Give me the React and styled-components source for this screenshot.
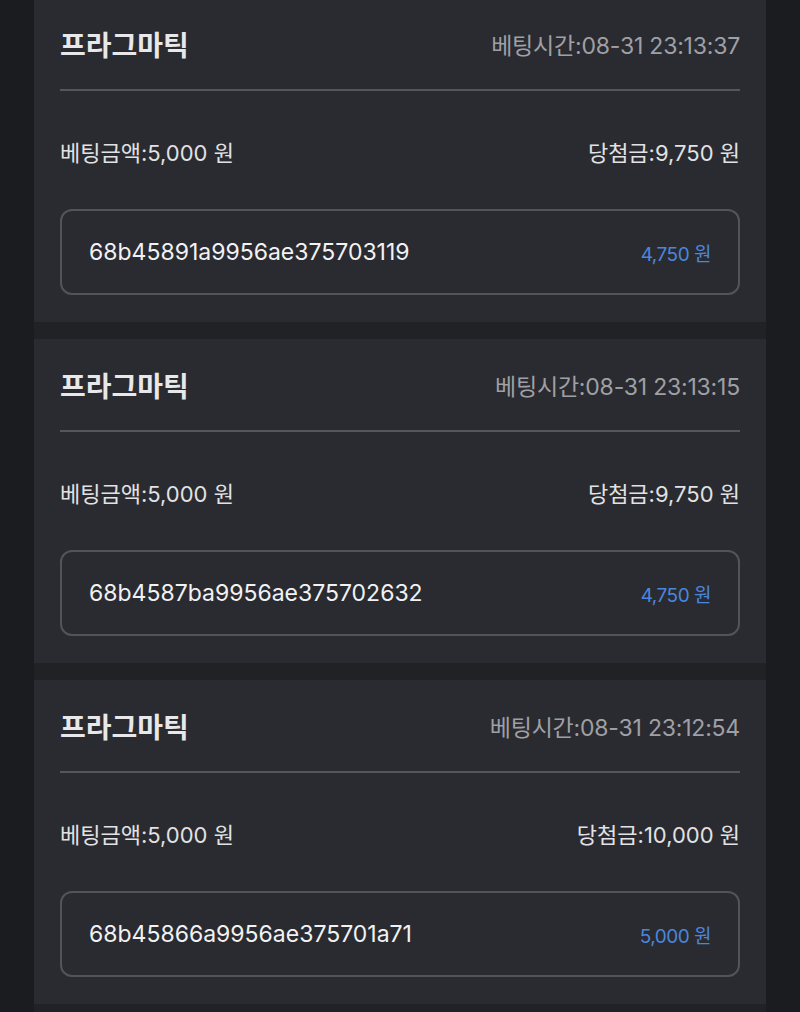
import React from 'react';
import styled, {createGlobalStyle} from 'styled-components';

const GlobalStyle = createGlobalStyle`
    html, body {
        margin: 0;
        padding: 0;
        background-color: #1b1c1f;
    }
    body {
        font-family: 'Inter', 'Noto Sans CJK KR', sans-serif;
        -webkit-font-smoothing: antialiased;
    }
`;

const List = styled.div`
    display: flex;
    flex-direction: column;
    gap: 17px;

    margin: -2px 34px 0;
    padding-bottom: 8px;

    background-color: #212226;
`;

const Card = styled.section`
    padding: 0 26px 27px;
    background-color: #2a2b30;
`;

const Header = styled.div`
    display: flex;
    align-items: center;
    justify-content: space-between;

    height: 91px;
    border-bottom: 2px solid #55565c;
`;

const Title = styled.h2`
    margin: 0;
    font-size: 28px;
    font-weight: 700;
    color: #e8e8ea;
`;

const Time = styled.span`
    font-size: 23px;
    letter-spacing: -0.2px;
    color: #9fa0a5;
`;

const AmountRow = styled.div`
    display: flex;
    align-items: center;
    justify-content: space-between;

    height: 40px;
    margin: 40px 0 38px;

    font-size: 22px;
    color: #e2e2e4;
`;

const TxBox = styled.div`
    display: flex;
    align-items: center;
    justify-content: space-between;
    box-sizing: border-box;

    height: 86px;
    padding: 0 27px;

    border: 2px solid #535459;
    border-radius: 12px;
`;

const TxId = styled.span`
    font-size: 23px;
    color: #f2f2f4;
`;

const Profit = styled.span`
    font-size: 19px;
    letter-spacing: -0.5px;
    color: #4a86de;
`;

const bets = [
    {id: '68b45891a9956ae375703119', time: '08-31 23:13:37', win: '9,750', profit: '4,750'},
    {id: '68b4587ba9956ae375702632', time: '08-31 23:13:15', win: '9,750', profit: '4,750'},
    {id: '68b45866a9956ae375701a71', time: '08-31 23:12:54', win: '10,000', profit: '5,000'},
];

const BetCard = ({id, time, win, profit}) => (
    <Card>
        <Header>
            <Title>프라그마틱</Title>
            <Time>베팅시간:{time}</Time>
        </Header>
        <AmountRow>
            <span>베팅금액:5,000 원</span>
            <span>당첨금:{win} 원</span>
        </AmountRow>
        <TxBox>
            <TxId>{id}</TxId>
            <Profit>{profit} 원</Profit>
        </TxBox>
    </Card>
);

const App = () => (
    <>
        <GlobalStyle />
        <List>
            {bets.map(bet => <BetCard key={bet.id} {...bet} />)}
        </List>
    </>
);

export default App;
